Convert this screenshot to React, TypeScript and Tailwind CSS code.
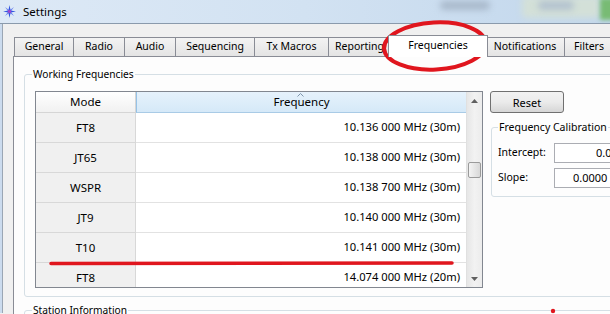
import React from 'react';

const tabs = [
    { label: 'General', cls: 'w-[60px]' },
    { label: 'Radio', cls: 'w-[52px] -ml-px' },
    { label: 'Audio', cls: 'w-[52px] -ml-px' },
    { label: 'Sequencing', cls: 'w-[80px] -ml-px' },
    { label: 'Tx Macros', cls: 'w-[75px] -ml-px' },
    { label: 'Reporting', cls: 'w-[63px] -ml-px' },
    { label: 'Frequencies', cls: 'w-[100px] -ml-[3px]', selected: true },
    { label: 'Notifications', cls: 'w-[80px] -ml-[3px]' },
    { label: 'Filters', cls: 'w-[50px] -ml-px' },
];

const rows = [
    { mode: 'FT8', freq: '10.136 000 MHz (30m)' },
    { mode: 'JT65', freq: '10.138 000 MHz (30m)' },
    { mode: 'WSPR', freq: '10.138 700 MHz (30m)' },
    { mode: 'JT9', freq: '10.140 000 MHz (30m)' },
    { mode: 'T10', freq: '10.141 000 MHz (30m)' },
    { mode: 'FT8', freq: '14.074 000 MHz (20m)' },
];

const AppIcon = () => (
    <svg width="13" height="13" viewBox="0 0 13 13">
        <path d="M2 2 L6.5 5.2 L11 2 L7.8 6.5 L11 11 L6.5 7.8 L2 11 L5.2 6.5 Z" fill="#6f86ee" />
        <path d="M6.5 0 L7.6 5.4 L13 6.5 L7.6 7.6 L6.5 13 L5.4 7.6 L0 6.5 L5.4 5.4 Z" fill="#2f55e0" />
        <circle cx="6.5" cy="6.5" r="1.8" fill="#9a48d0" />
    </svg>
);

const App = () => {
    return (
        <div className="relative w-[610px] h-[314px] overflow-hidden bg-[#f0f0f0] font-['Noto_Sans',sans-serif] text-black">
            {/* title bar */}
            <div className="relative h-[23px] bg-linear-to-r from-[#dde9f6] via-[#d2e2f2] to-[#c2d7ec] flex items-center pl-[3px] gap-[7px] overflow-hidden">
                <AppIcon />
                <span className="text-[11.5px] leading-none">Settings</span>
                <div className="absolute left-[440px] top-[1px] w-[50px] h-[9px] rounded-full bg-[#a9b9cb] blur-[3px]" />
                <div className="absolute left-[522px] -top-[4px] w-[78px] h-[22px] rounded bg-[#d3e0d8] blur-[3px]" />
                <div className="absolute left-[538px] top-[1px] w-[36px] h-[9px] rounded-full bg-[#b3c2cf] blur-[3px]" />
                <div className="absolute left-[600px] -top-[2px] w-[16px] h-[22px] bg-[#78bb74] blur-[2px]" />
            </div>

            <div className="flex border-t border-[#8a9aac] h-[290px]">
                <div className="w-[3px] shrink-0 bg-[#cbdbee] border-r border-[#9aa6b4]" />
                <div className="pl-[10px] pt-[11px] flex-1">
                    {/* tabs */}
                    <div className="flex items-end h-[21px] pl-px">
                        {tabs.map((t) =>
                            t.selected ? (
                                <div key={t.label} className={`${t.cls} relative z-10 h-[22px] -mb-px shrink-0 bg-white border border-b-0 border-[#898c95] flex items-center justify-center pb-[2px] text-[10.5px]`}>
                                    {t.label}
                                </div>
                            ) : (
                                <div key={t.label} className={`${t.cls} h-[19px] shrink-0 bg-linear-to-b from-[#f3f3f3] to-[#e4e4e4] border border-b-0 border-[#898c95] flex items-center justify-center text-[10.5px]`}>
                                    {t.label}
                                </div>
                            )
                        )}
                    </div>

                    {/* tab panel */}
                    <div className="border-l border-t border-[#898c95] bg-[#fdfdfd] h-[300px] w-[620px] pl-[10px] pt-[17px]">
                        <div className="relative w-[620px] border border-[#d5dfe5] rounded-[3px] pl-[10px] pt-[16px] pb-[8px]">
                            <span className="absolute left-[7px] -top-[9px] px-px bg-[#fdfdfd] text-[10.2px] leading-[16px]">Working Frequencies</span>
                            <div className="flex">
                                {/* table */}
                                <div className="w-[448px] h-[197px] shrink-0 border border-[#828790] flex overflow-hidden bg-white">
                                    <div className="flex-1 flex flex-col overflow-hidden">
                                        <div className="flex h-[21px] shrink-0 text-[11.5px]">
                                            <div className="w-[100px] border-r border-b border-[#d5d5d5] bg-linear-to-b from-white to-[#f1f1f1] flex items-center justify-center">Mode</div>
                                            <div className="relative flex-1 border-b border-[#a9cbe6] border-l border-l-[#96c2e6] bg-linear-to-b from-[#e6f2fc] to-[#d5e9f8] flex items-center justify-center">
                                                Frequency
                                                <svg className="absolute left-[160px] top-[1px]" width="7" height="4" viewBox="0 0 7 4">
                                                    <path d="M0.5 3.5 L3.5 0.5 L6.5 3.5" fill="none" stroke="#7f96ad" strokeWidth="1" />
                                                </svg>
                                            </div>
                                        </div>
                                        {rows.map((r, i) => (
                                            <div key={i} className="flex h-[30px] shrink-0">
                                                <div className="w-[100px] bg-[#f0f0f0] border-r border-b border-[#d8d8d8] flex items-center justify-center text-[11.5px]">{r.mode}</div>
                                                <div className="flex-1 border-b border-[#e2e2e2] flex items-center justify-end pr-[6px] text-[11.2px]">{r.freq}</div>
                                            </div>
                                        ))}
                                    </div>
                                    {/* scrollbar */}
                                    <div className="w-[16px] shrink-0 flex flex-col bg-linear-to-r from-[#e6e6e6] via-[#f2f2f2] to-[#ececec] border-l border-[#e0e0e0]">
                                        <div className="h-[17px] flex items-center justify-center">
                                            <svg width="7" height="4" viewBox="0 0 7 4"><path d="M0 4 L3.5 0 L7 4 Z" fill="#606060" /></svg>
                                        </div>
                                        <div className="h-[53px]" />
                                        <div className="h-[16px] mx-px rounded-[2px] border border-[#9a9a9a] bg-linear-to-r from-[#f4f4f4] to-[#d8d8d8]" />
                                        <div className="flex-1" />
                                        <div className="h-[17px] flex items-center justify-center">
                                            <svg width="7" height="4" viewBox="0 0 7 4"><path d="M0 0 L3.5 4 L7 0 Z" fill="#606060" /></svg>
                                        </div>
                                    </div>
                                </div>

                                {/* right column */}
                                <div className="ml-[7px] flex flex-col">
                                    <button className="w-[74px] h-[22px] rounded-[3px] border border-[#707070] bg-linear-to-b from-[#f2f2f2] via-[#ebebeb] to-[#d6d6d6] text-[11px] leading-none">Reset</button>
                                    <div className="relative ml-px mt-[14px] w-[170px] border border-[#d5dfe5] rounded-[3px] pl-[6px] pt-[15px] pb-[8px] flex flex-col gap-[5px]">
                                        <span className="absolute left-[6px] -top-[9px] px-px bg-[#fdfdfd] text-[10.5px] leading-[16px] whitespace-nowrap">Frequency Calibration</span>
                                        <div className="flex items-center">
                                            <span className="w-[56px] shrink-0 text-[10.5px]">Intercept:</span>
                                            <div className="w-[87px] shrink-0 h-[20px] border border-[#abadb3] bg-white flex items-center justify-end pr-[6px] text-[11px] whitespace-nowrap">0.00 Hz</div>
                                        </div>
                                        <div className="flex items-center">
                                            <span className="w-[56px] shrink-0 text-[10.5px]">Slope:</span>
                                            <div className="w-[87px] shrink-0 h-[20px] border border-[#abadb3] bg-white flex items-center justify-end pr-[6px] text-[11px] whitespace-nowrap">0.0000 ppm</div>
                                        </div>
                                    </div>
                                </div>
                            </div>
                        </div>

                        {/* station information */}
                        <div className="relative mt-[13px] w-[620px] h-[40px] border border-[#d5dfe5] rounded-[3px]">
                            <span className="absolute left-[7px] -top-[9px] px-px bg-[#fdfdfd] text-[10.2px] leading-[16px]">Station Information</span>
                        </div>
                    </div>
                </div>
            </div>

            {/* red annotations */}
            <svg className="absolute inset-0 pointer-events-none" width="610" height="314" viewBox="0 0 610 314">
                <ellipse cx="435" cy="46" rx="51" ry="23.5" transform="rotate(-3 435 46)" fill="none" stroke="#e0161e" strokeWidth="4" />
                <line x1="51" y1="263.5" x2="452" y2="263" stroke="#e0161e" strokeWidth="3.5" strokeLinecap="round" />
                <circle cx="553" cy="311" r="2.2" fill="#e0161e" />
            </svg>
        </div>
    );
};

export default App;
